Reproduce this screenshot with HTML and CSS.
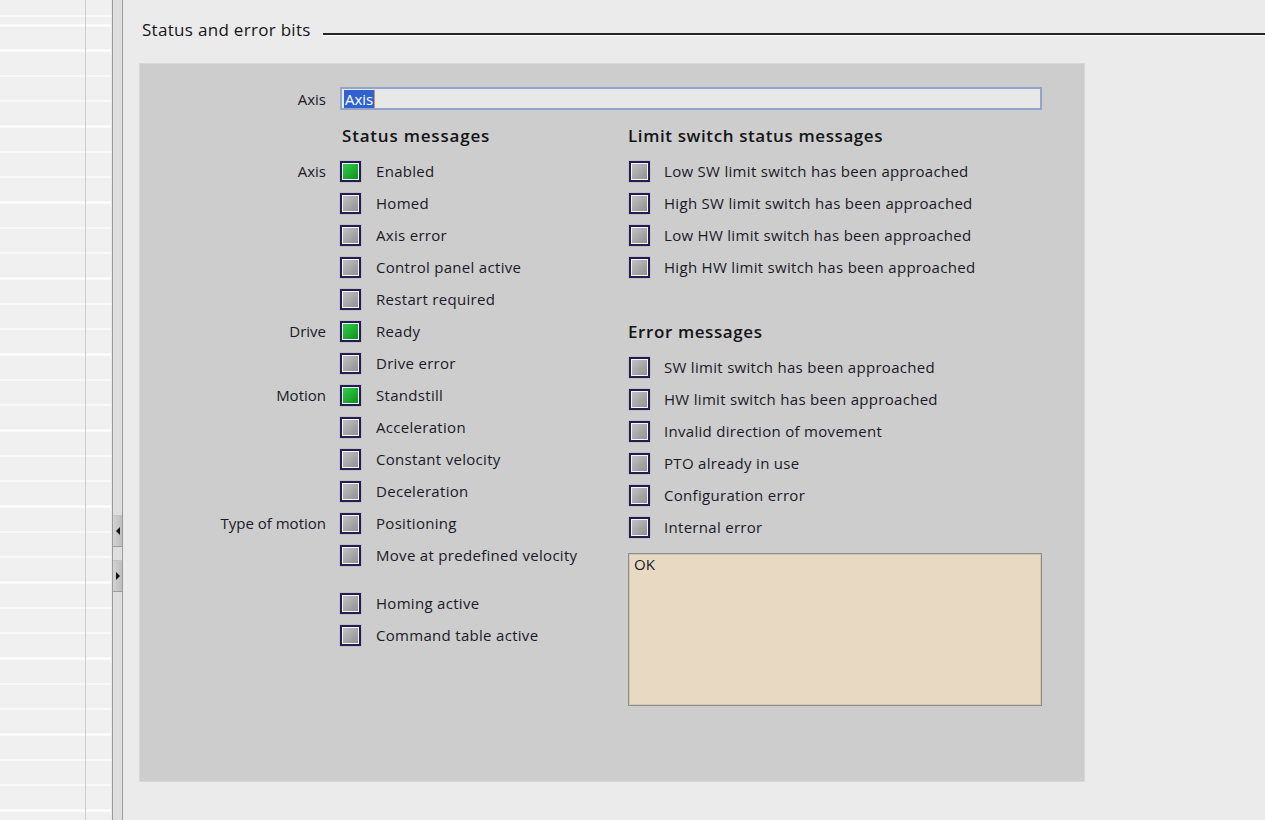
FILE: index.html
```html
<!DOCTYPE html>
<html lang="en">
<head>
<meta charset="utf-8">
<title>Status and error bits</title>
<link rel="stylesheet" href="styles.css">
</head>
<body>
<div class="app">
  <aside class="tree">
    <div class="tree-main"></div>
    <div class="tree-side"></div>
  </aside>
  <div class="splitter">
    <div class="split-btn"><span class="arrow arrow-left"></span></div>
    <div class="split-btn"><span class="arrow arrow-right"></span></div>
  </div>
  <main class="content">
    <div class="section-title">
      <h2>Status and error bits</h2>
      <div class="rule"></div>
    </div>
    <section class="panel">
      <div class="axis-row">
        <span class="side">Axis</span>
        <div class="input"><span class="sel">Axis</span><span class="caret"></span></div>
      </div>
      <div class="columns">
        <div class="col col-status">
          <h3 class="heading">Status messages</h3>
          <div class="row"><span class="side">Axis</span><span class="cb on"></span><span class="txt">Enabled</span></div>
          <div class="row"><span class="side"></span><span class="cb"></span><span class="txt">Homed</span></div>
          <div class="row"><span class="side"></span><span class="cb"></span><span class="txt">Axis error</span></div>
          <div class="row"><span class="side"></span><span class="cb"></span><span class="txt">Control panel active</span></div>
          <div class="row"><span class="side"></span><span class="cb"></span><span class="txt">Restart required</span></div>
          <div class="row"><span class="side">Drive</span><span class="cb on"></span><span class="txt">Ready</span></div>
          <div class="row"><span class="side"></span><span class="cb"></span><span class="txt">Drive error</span></div>
          <div class="row"><span class="side">Motion</span><span class="cb on"></span><span class="txt">Standstill</span></div>
          <div class="row"><span class="side"></span><span class="cb"></span><span class="txt">Acceleration</span></div>
          <div class="row"><span class="side"></span><span class="cb"></span><span class="txt">Constant velocity</span></div>
          <div class="row"><span class="side"></span><span class="cb"></span><span class="txt">Deceleration</span></div>
          <div class="row"><span class="side">Type of motion</span><span class="cb"></span><span class="txt">Positioning</span></div>
          <div class="row"><span class="side"></span><span class="cb"></span><span class="txt">Move at predefined velocity</span></div>
          <div class="row row-gap"><span class="side"></span><span class="cb"></span><span class="txt">Homing active</span></div>
          <div class="row"><span class="side"></span><span class="cb"></span><span class="txt">Command table active</span></div>
        </div>
        <div class="col col-right">
          <h3 class="heading">Limit switch status messages</h3>
          <div class="row"><span class="cb"></span><span class="txt">Low SW limit switch has been approached</span></div>
          <div class="row"><span class="cb"></span><span class="txt">High SW limit switch has been approached</span></div>
          <div class="row"><span class="cb"></span><span class="txt">Low HW limit switch has been approached</span></div>
          <div class="row"><span class="cb"></span><span class="txt">High HW limit switch has been approached</span></div>
          <h3 class="heading heading-error">Error messages</h3>
          <div class="row"><span class="cb"></span><span class="txt">SW limit switch has been approached</span></div>
          <div class="row"><span class="cb"></span><span class="txt">HW limit switch has been approached</span></div>
          <div class="row"><span class="cb"></span><span class="txt">Invalid direction of movement</span></div>
          <div class="row"><span class="cb"></span><span class="txt">PTO already in use</span></div>
          <div class="row"><span class="cb"></span><span class="txt">Configuration error</span></div>
          <div class="row"><span class="cb"></span><span class="txt">Internal error</span></div>
          <div class="message-box">OK</div>
        </div>
      </div>
    </section>
  </main>
</div>
</body>
</html>
```
FILE: styles.css
```css
* { box-sizing: border-box; }
html, body { margin: 0; padding: 0; }
body {
  background: #ebebeb;
  font-family: "Open Sans", "Noto Sans", "DejaVu Sans", sans-serif;
  color: #1a1a28;
  width: 1265px;
  height: 820px;
  overflow: hidden;
}
.app { display: flex; height: 820px; }

/* left tree */
.tree { display: flex; width: 112px; flex: none; height: 100%; }
.tree-main, .tree-side {
  height: 100%;
  background-color: #f0f0f0;
  background-image: repeating-linear-gradient(to bottom, #ffffff 0, #ffffff 1.5px, #f0f0f0 1.5px, #f0f0f0 25.33px);
  background-position: 0 24.5px;
}
.tree-main { width: 86px; border-right: 1px solid #cdcdcd; }
.tree-side { width: 25px; }

/* splitter */
.splitter {
  width: 11px; flex: none; height: 100%;
  background: #dedede;
  border-left: 1px solid #9a9a9a;
  border-right: 1px solid #9a9a9a;
  display: flex; flex-direction: column;
  padding-top: 515px;
}
.split-btn {
  height: 32px; width: 100%;
  background: linear-gradient(to right, #d2d2d2, #bdbdbd);
  border-bottom: 1px solid #9c9c9c;
  border-top: 1px solid #c4c4c4;
  display: flex; align-items: center; justify-content: center;
}
.split-btn + .split-btn { margin-top: 13px; }
.arrow { width: 0; height: 0; border-top: 4px solid transparent; border-bottom: 4px solid transparent; }
.arrow-left { border-right: 4px solid #111; }
.arrow-right { border-left: 4px solid #111; }

/* content */
.content { flex: 1; padding-top: 18px; }
.section-title { display: flex; height: 24px; padding-left: 19px; }
.section-title h2 {
  margin: 0; font-size: 17px; font-weight: normal; line-height: 24px; color: #151520;
  letter-spacing: 0.3px; white-space: nowrap;
}
.rule {
  flex: 1; margin-left: 12px; margin-top: 15px; height: 3px;
  border-top: 2px solid #252525; border-bottom: 1px solid #ffffff;
}

.panel {
  margin: 21px 0 0 16px;
  width: 946px; height: 719px;
  background: #cdcdcd;
  border: 1px solid #d8d8d8;
  padding-top: 23px;
  font-size: 15px;
  letter-spacing: 0.3px;
}
.side {
  width: 186px; flex: none; text-align: right; white-space: nowrap; letter-spacing: 0;
}
.axis-row { display: flex; align-items: center; height: 23px; }
.input {
  margin-left: 14px; width: 702px; height: 23px;
  background: #e8e8e8;
  border: 2px solid #93a4c8;
  display: flex; align-items: center; padding-left: 2px;
  letter-spacing: 0;
}
.sel { background: #2f62d0; color: #fff; line-height: 18px; padding: 0 1px; }
.caret { width: 1px; height: 18px; background: #c89a52; }

.columns { display: flex; margin-top: 10px; }
.col-status { width: 488px; flex: none; }
.heading {
  margin: 0 0 3px 0; height: 32px; line-height: 32px;
  font-size: 17px; font-weight: 600; color: #141418; white-space: nowrap;
  letter-spacing: 0.6px;
}
.col-status .heading { padding-left: 202px; letter-spacing: 0.8px; }
.heading-error { margin-top: 33px; }
.row { display: flex; align-items: center; height: 32px; white-space: nowrap; }
.row-gap { margin-top: 16px; }
.cb {
  width: 21px; height: 21px; flex: none;
  margin-left: 14px;
  border: 2px solid #211d52;
  box-shadow: inset 0 0 0 1px #f6f6f6, 0 0 1px #8888a0;
  background: linear-gradient(135deg, #c6c6c6, #8c8c8c);
}
.cb.on { background: linear-gradient(135deg, #36d44a, #0c8a1c); }
.col-right .cb { margin-left: 1px; }
.txt { margin-left: 15px; }
.col-right .txt { margin-left: 14px; }

.message-box {
  margin-top: 10px;
  width: 414px; height: 153px;
  background: #e8d9c2;
  border: 1px solid #8e8e8e;
  box-shadow: inset 0 0 0 1px #d4c6ae;
  padding: 0 5px;
  font-size: 15px;
  letter-spacing: 0;
}
```
